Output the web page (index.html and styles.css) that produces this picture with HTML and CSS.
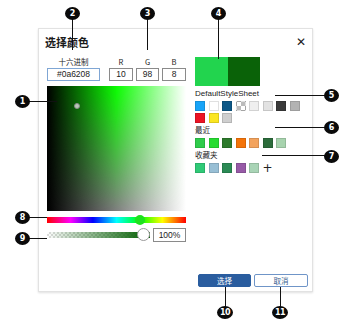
FILE: index.html
```html
<!DOCTYPE html>
<html lang="zh-CN">

<head>
    <meta charset="UTF-8">
    <meta name="viewport" content="width=device-width, initial-scale=1.0">
    <title>选择颜色</title>
    <link rel="stylesheet" href="styles.css">
</head>

<body>
    <div class="page">
        <div class="dialog">
            <div class="dialog-header">
                <span class="dialog-title">选择颜色</span>
                <span class="close-btn">✕</span>
            </div>

            <div class="dialog-body">
                <div class="picker">
                    <div class="field-labels">
                        <span class="w-hex">十六进制</span>
                        <span class="w-r">R</span>
                        <span class="w-g">G</span>
                        <span class="w-b">B</span>
                    </div>
                    <div class="field-inputs">
                        <div class="field w-hex field-active">#0a6208</div>
                        <div class="field w-r">10</div>
                        <div class="field w-g">98</div>
                        <div class="field w-b">8</div>
                    </div>

                    <div class="color-area">
                        <div class="color-area-hue"></div>
                        <span class="color-marker"></span>
                    </div>

                    <div class="hue-row">
                        <div class="hue-track">
                            <span class="hue-knob"></span>
                        </div>
                    </div>

                    <div class="alpha-row">
                        <div class="alpha-track">
                            <div class="alpha-fill"></div>
                            <span class="alpha-knob"></span>
                        </div>
                        <div class="field alpha-field">100%</div>
                    </div>
                </div>

                <div class="palette">
                    <div class="preview">
                        <span class="preview-old"></span>
                        <span class="preview-new"></span>
                    </div>

                    <div class="palette-label">DefaultStyleSheet</div>
                    <div class="swatches">
                        <span class="swatch" style="background:#18a4f8"></span>
                        <span class="swatch" style="background:#ffffff"></span>
                        <span class="swatch" style="background:#0d5887"></span>
                        <span class="swatch swatch-clear"></span>
                        <span class="swatch" style="background:#efefef"></span>
                        <span class="swatch" style="background:#e2e2e2"></span>
                        <span class="swatch" style="background:#3a3a3a"></span>
                        <span class="swatch" style="background:#b3b3b3"></span>
                        <span class="swatch" style="background:#ec1424"></span>
                        <span class="swatch" style="background:#fbe622"></span>
                        <span class="swatch" style="background:#cfcfcf"></span>
                    </div>

                    <div class="palette-label label-cjk">最近</div>
                    <div class="swatches">
                        <span class="swatch" style="background:#2fcc4b"></span>
                        <span class="swatch" style="background:#26dc31"></span>
                        <span class="swatch" style="background:#2d7a2c"></span>
                        <span class="swatch" style="background:#f47308"></span>
                        <span class="swatch" style="background:#f3a35d"></span>
                        <span class="swatch" style="background:#2c6c3b"></span>
                        <span class="swatch" style="background:#a7d3ae"></span>
                    </div>

                    <div class="palette-label label-cjk">收藏夹</div>
                    <div class="swatches">
                        <span class="swatch" style="background:#2fca77"></span>
                        <span class="swatch" style="background:#98bfd5"></span>
                        <span class="swatch" style="background:#2b8a55"></span>
                        <span class="swatch" style="background:#975aa7"></span>
                        <span class="swatch" style="background:#a9d4b6"></span>
                        <span class="add-swatch">+</span>
                    </div>
                </div>
            </div>

            <div class="dialog-footer">
                <button class="btn btn-primary">选择</button>
                <button class="btn btn-secondary">取消</button>
            </div>
        </div>

        <!-- numbered callouts -->
        <div class="callouts">
            <span class="line line-h" style="left:29px;top:101px;width:28px"></span>
            <span class="line line-v" style="left:72px;top:18px;height:32px"></span>
            <span class="line line-v" style="left:147px;top:18px;height:32px"></span>
            <span class="line line-v" style="left:218px;top:18px;height:41px"></span>
            <span class="line line-h" style="left:275px;top:95px;width:50px"></span>
            <span class="line line-h" style="left:275px;top:127px;width:50px"></span>
            <span class="line line-h" style="left:262px;top:155px;width:63px"></span>
            <span class="line line-h" style="left:29px;top:217px;width:18px"></span>
            <span class="line line-h" style="left:29px;top:238px;width:18px"></span>
            <span class="line line-v" style="left:225px;top:287px;height:20px"></span>
            <span class="line line-v" style="left:280px;top:287px;height:20px"></span>

            <span class="badge" style="left:22px;top:101px">1</span>
            <span class="badge" style="left:72px;top:13px">2</span>
            <span class="badge" style="left:147px;top:13px">3</span>
            <span class="badge" style="left:218px;top:13px">4</span>
            <span class="badge" style="left:331px;top:95px">5</span>
            <span class="badge" style="left:331px;top:127px">6</span>
            <span class="badge" style="left:331px;top:156px">7</span>
            <span class="badge" style="left:22px;top:217px">8</span>
            <span class="badge" style="left:22px;top:238px">9</span>
            <span class="badge badge-wide" style="left:225px;top:312px">10</span>
            <span class="badge badge-wide" style="left:280px;top:312px">11</span>
        </div>
    </div>
</body>

</html>
```

FILE: styles.css
```css
* {
    box-sizing: border-box;
}

body {
    margin: 0;
    background: #fff;
    font-family: "Liberation Sans", "Noto Sans CJK SC", sans-serif;
    color: #222;
}

.page {
    position: relative;
    width: 349px;
    height: 326px;
    padding: 28px 0 0 38px;
}

.dialog {
    display: flex;
    flex-direction: column;
    width: 275px;
    height: 264px;
    background: #fff;
    border: 1px solid #e2e2e2;
    box-shadow: 0 1px 2px rgba(0, 0, 0, 0.12);
}

.dialog-header {
    display: flex;
    align-items: center;
    justify-content: space-between;
    height: 14px;
    margin-top: 6px;
    padding: 0 6px 0 6px;
}

.dialog-title {
    font-family: "Noto Sans CJK SC", sans-serif;
    font-size: 11px;
    font-weight: 700;
    color: #1a1a1a;
}

.close-btn {
    font-family: "DejaVu Sans", sans-serif;
    font-size: 12px;
    font-weight: 700;
    color: #1a1a1a;
}

.dialog-body {
    display: grid;
    grid-template-columns: 139px 1fr;
    column-gap: 9px;
    margin-top: 8px;
    padding-left: 8px;
}

/* left column */
.field-labels,
.field-inputs {
    display: flex;
}

.field-labels {
    height: 9px;
    font-family: "Noto Sans CJK SC", sans-serif;
    font-size: 7.5px;
    line-height: 9px;
    color: #222;
}

.field-labels span {
    text-align: center;
}

.field-inputs {
    margin-top: 2px;
}

.w-hex {
    width: 53px;
    margin-right: 9px;
}

.w-r {
    width: 24px;
    margin-right: 3px;
}

.w-g {
    width: 23px;
    margin-right: 3px;
}

.w-b {
    width: 24px;
}

.field {
    height: 13px;
    border: 1px solid #8a8a8a;
    font-size: 8.5px;
    line-height: 11px;
    text-align: center;
    color: #222;
}

.field-active {
    border-color: #7fa6d4;
}

.color-area {
    position: relative;
    height: 125px;
    margin-top: 5px;
    background: linear-gradient(to right, #000, #808080 50%, #fff);
}

.color-area-hue {
    height: 100%;
    background: linear-gradient(to right, #000, #0aff00 50%, #fff);
    -webkit-mask-image: linear-gradient(to bottom, #000, transparent);
    mask-image: linear-gradient(to bottom, #000, transparent);
}

.color-marker {
    position: absolute;
    left: 27px;
    top: 17px;
    width: 6px;
    height: 6px;
    border-radius: 50%;
    border: 1.5px solid #8a8a8a;
    background: #b9c9b8;
}

.hue-row {
    margin-top: 6px;
}

.hue-track {
    position: relative;
    height: 6px;
    background: linear-gradient(to right, #f00, #f0f 17%, #00f 33%, #0ff 50%, #0f0 67%, #ff0 83%, #f00);
}

.hue-knob {
    position: absolute;
    left: 88px;
    top: -2px;
    width: 10px;
    height: 10px;
    border-radius: 50%;
    background: #1ee21e;
}

.alpha-row {
    display: flex;
    align-items: center;
    height: 14px;
    margin-top: 5px;
}

.alpha-track {
    position: relative;
    width: 103px;
    height: 6px;
    background-color: #fff;
    background-image:
        linear-gradient(45deg, #ddd 25%, transparent 25%, transparent 75%, #ddd 75%),
        linear-gradient(45deg, #ddd 25%, transparent 25%, transparent 75%, #ddd 75%);
    background-size: 4px 4px;
    background-position: 0 0, 2px 2px;
}

.alpha-fill {
    height: 100%;
    background: linear-gradient(to right, rgba(10, 98, 8, 0), #0a6208 95%);
}

.alpha-knob {
    position: absolute;
    left: 90px;
    top: -4px;
    width: 13px;
    height: 13px;
    border-radius: 50%;
    background: #fff;
    border: 1px solid #9a9a9a;
}

.alpha-field {
    width: 33px;
    height: 14px;
    margin-left: auto;
    line-height: 12px;
}

/* right column */
.preview {
    display: flex;
    width: 65px;
    height: 29px;
}

.preview-old {
    flex: 1;
    background: #22d44e;
}

.preview-new {
    flex: 1;
    background: #0a6208;
}

.palette-label {
    height: 10px;
    margin-top: 3px;
    font-size: 8px;
    line-height: 10px;
    color: #222;
}

.label-cjk {
    margin-top: 2px;
    font-family: "Noto Sans CJK SC", sans-serif;
    font-size: 7.5px;
}

.swatches {
    display: grid;
    grid-template-columns: repeat(8, 10px);
    column-gap: 3.5px;
    row-gap: 2px;
    margin-top: 2px;
}

.label-cjk + .swatches {
    margin-top: 3px;
}

.swatch {
    width: 10px;
    height: 10px;
    border: 1px solid rgba(0, 0, 0, 0.12);
}

.swatch-clear {
    background-color: #fff;
    background-image:
        linear-gradient(45deg, #bbb 25%, transparent 25%, transparent 75%, #bbb 75%),
        linear-gradient(45deg, #bbb 25%, transparent 25%, transparent 75%, #bbb 75%);
    background-size: 8px 8px;
    background-position: 0 0, 4px 4px;
}

.add-swatch {
    font-family: "DejaVu Sans", sans-serif;
    font-size: 12px;
    line-height: 10px;
    color: #222;
}

/* footer */
.dialog-footer {
    display: flex;
    justify-content: flex-end;
    gap: 3px;
    margin-top: auto;
    padding: 0 4px 4px 0;
}

.btn {
    height: 13px;
    padding: 0;
    border-radius: 2px;
    font-family: "Noto Sans CJK SC", sans-serif;
    font-size: 7.5px;
    line-height: 11px;
}

.btn-primary {
    width: 53px;
    background: #2a5d9f;
    border: 1px solid #2a5d9f;
    color: #fff;
}

.btn-secondary {
    width: 54px;
    background: #fff;
    border: 1px solid #6f95c8;
    color: #3a5f90;
}

/* callouts */
.callouts {
    position: absolute;
    inset: 0;
    pointer-events: none;
}

.line {
    position: absolute;
    background: #111;
}

.line-h {
    height: 1px;
}

.line-v {
    width: 1px;
}

.badge {
    position: absolute;
    width: 15px;
    height: 13px;
    margin: -6px 0 0 -7px;
    border-radius: 50%;
    background: #0a0a0a;
    color: #fff;
    font-family: "DejaVu Sans", sans-serif;
    font-size: 8px;
    font-weight: 700;
    line-height: 13px;
    text-align: center;
}

.badge-wide {
    width: 16px;
    margin-left: -8px;
    letter-spacing: -0.5px;
}
```
